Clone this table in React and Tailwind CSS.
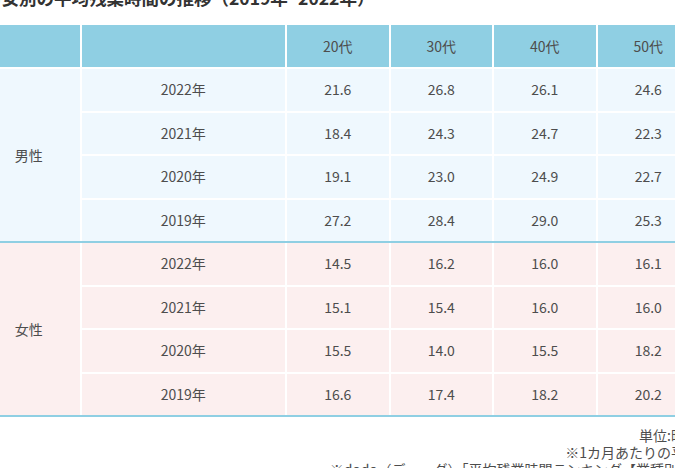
import React from "react";

const cols = "grid-cols-[101.5px_203.5px_101.5px_101.5px_101.5px_101.5px]";

const male = [
  ["2022年", "21.6", "26.8", "26.1", "24.6"],
  ["2021年", "18.4", "24.3", "24.7", "22.3"],
  ["2020年", "19.1", "23.0", "24.9", "22.7"],
  ["2019年", "27.2", "28.4", "29.0", "25.3"],
];
const female = [
  ["2022年", "14.5", "16.2", "16.0", "16.1"],
  ["2021年", "15.1", "15.4", "16.0", "16.0"],
  ["2020年", "15.5", "14.0", "15.5", "18.2"],
  ["2019年", "16.6", "17.4", "18.2", "20.2"],
];

function Section({ label, rows, bg }) {
  return (
    <div className={`grid ${cols} grid-rows-[repeat(4,41.5px)] gap-[2px]`}>
      <div className={`row-span-4 col-start-1 row-start-1 flex items-center justify-center ${bg}`}>
        {label}
      </div>
      {rows.map((r, i) => (
        <React.Fragment key={i}>
          {r.map((c, j) => (
            <div key={j} className={`flex items-center justify-center ${bg}`}>
              {c}
            </div>
          ))}
        </React.Fragment>
      ))}
    </div>
  );
}

export default function App() {
  return (
    <div
      className="w-[675px] h-[468px] overflow-hidden bg-white text-[#4d4d4d]"
      style={{ fontFamily: '"Noto Sans CJK JP", "Noto Sans", sans-serif' }}
    >
      <div className="-ml-[22px] w-[721px]">
        <h2 className="-mt-[15px] ml-[6px] text-[17.5px] leading-[26px] font-bold text-[#333333] whitespace-nowrap">
          男女別の平均残業時間の推移（2019年~2022年）
        </h2>
        <div className="mt-[14px] text-[14px]">
          <div className={`grid ${cols} h-[42px] gap-[2px]`}>
            <div className="bg-[#8fcfe3]"></div>
            <div className="bg-[#8fcfe3]"></div>
            <div className="bg-[#8fcfe3] flex items-center justify-center">20代</div>
            <div className="bg-[#8fcfe3] flex items-center justify-center">30代</div>
            <div className="bg-[#8fcfe3] flex items-center justify-center">40代</div>
            <div className="bg-[#8fcfe3] flex items-center justify-center">50代</div>
          </div>
          <div className="mt-[2px]">
            <Section label="男性" rows={male} bg="bg-[#eff8fe]" />
          </div>
          <div className="h-[2px] bg-[#8fcfe3]"></div>
          <Section label="女性" rows={female} bg="bg-[#fcefef]" />
          <div className="h-[2px] bg-[#8fcfe3]"></div>
        </div>
        <div className="mt-[10px] text-right text-[14px] leading-[16.8px] whitespace-nowrap">
          <p>単位:時間</p>
          <p>※1カ月あたりの平均</p>
          <p>※doda（デューダ）「平均残業時間ランキング【業種別】」</p>
        </div>
      </div>
    </div>
  );
}
